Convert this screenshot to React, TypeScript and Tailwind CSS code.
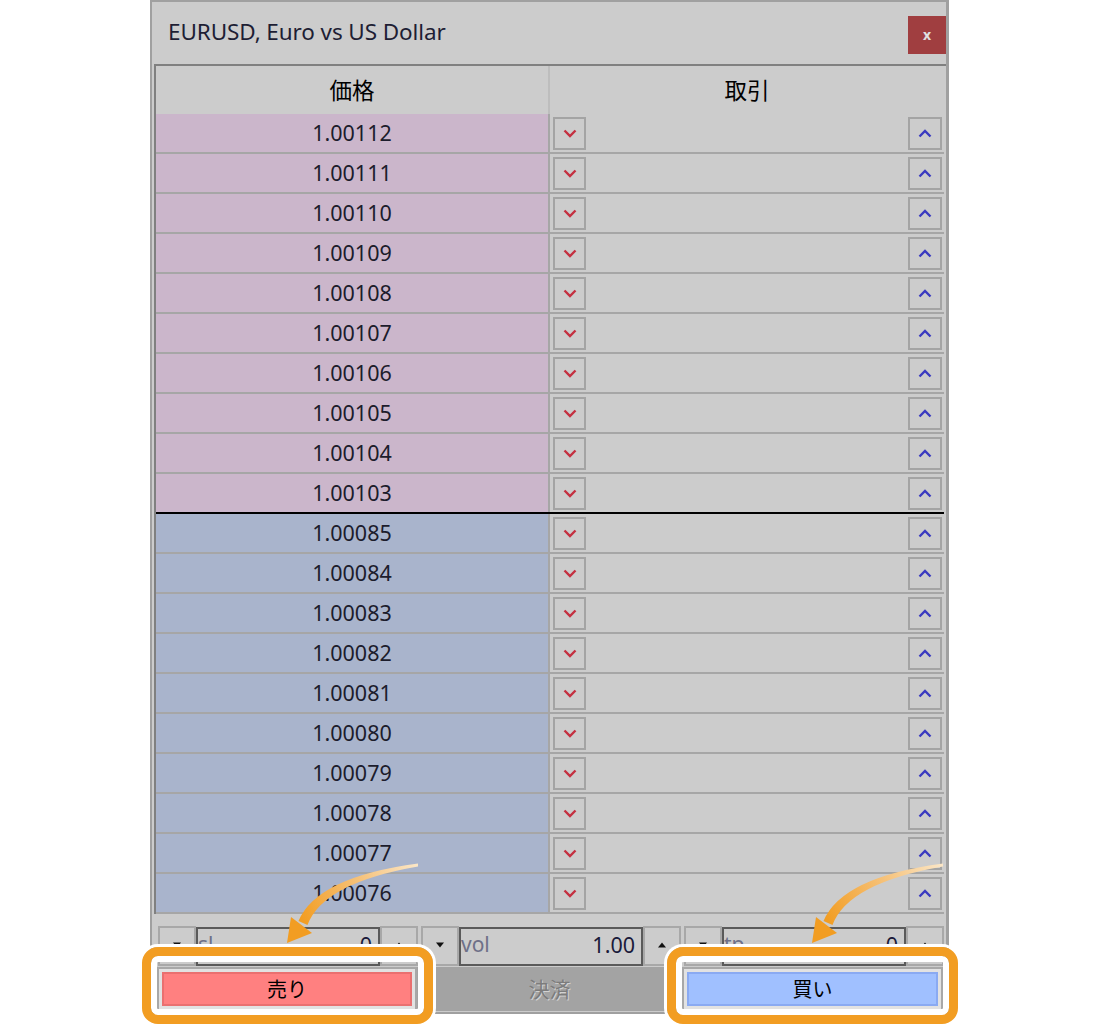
import React from "react";

const pinkPrices = ["1.00112","1.00111","1.00110","1.00109","1.00108","1.00107","1.00106","1.00105","1.00104","1.00103"];
const bluePrices = ["1.00085","1.00084","1.00083","1.00082","1.00081","1.00080","1.00079","1.00078","1.00077","1.00076"];

function ChevronDown() {
  return (
    <svg width="14" height="9" viewBox="0 0 14 9">
      <polyline points="1.5,1.5 7,7 12.5,1.5" fill="none" stroke="#c43040" strokeWidth="2.4" strokeLinejoin="miter" />
    </svg>
  );
}

function ChevronUp() {
  return (
    <svg width="14" height="9" viewBox="0 0 14 9">
      <polyline points="1.5,7.5 7,2 12.5,7.5" fill="none" stroke="#3a3ac0" strokeWidth="2.4" strokeLinejoin="miter" />
    </svg>
  );
}

function TriDown() {
  return (
    <svg width="10" height="6" viewBox="0 0 10 6">
      <polygon points="1,0.5 9,0.5 5,5.5" fill="#111" />
    </svg>
  );
}

function TriUp() {
  return (
    <svg width="10" height="6" viewBox="0 0 10 6">
      <polygon points="1,5.5 9,5.5 5,0.5" fill="#111" />
    </svg>
  );
}

function Row({ price, kind, last }: { price: string; kind: "pink" | "blue"; last: boolean }) {
  return (
    <div className={`flex h-[40px] border-b-2 ${last ? "border-black" : "border-[#a6a6a6]"}`}>
      <div
        className={`w-[394px] shrink-0 border-r-2 border-[#a6a6a6] flex items-center justify-center text-[21.5px] text-[#1c1c2c] pt-[1px] ${
          kind === "pink" ? "bg-[#cbb6cb]" : "bg-[#a9b4cc]"
        }`}
      >
        {price}
      </div>
      <div className="flex-1 flex items-center justify-between pl-[3px] pr-[2px]">
        <div className="w-[33px] h-[33px] border-2 border-[#a4a4a4] flex items-center justify-center">
          <ChevronDown />
        </div>
        <div className="w-[34px] h-[33px] border-2 border-[#a4a4a4] flex items-center justify-center">
          <ChevronUp />
        </div>
      </div>
    </div>
  );
}

function SpinGroup({ label, value }: { label: string; value: string }) {
  return (
    <div className="flex h-[40px]">
      <div className="w-[38px] shrink-0 border-2 border-[#a8a8a8] flex items-center justify-center pb-[2px]">
        <TriDown />
      </div>
      <div className="flex-1 border-2 border-[#5a5a5a] flex items-center justify-between pl-[0px] pr-[6px] h-[39px] mt-[1px] pb-[3px]">
        <span className="text-[21px] text-[#6e7088]">{label}</span>
        <span className="text-[21.5px] text-[#1a1a3a]">{value}</span>
      </div>
      <div className="w-[38px] shrink-0 border-2 border-[#a8a8a8] flex items-center justify-center pb-[2px]">
        <TriUp />
      </div>
    </div>
  );
}

function Arrow({ left, id }: { left: number; id: string }) {
  return (
    <svg
      className="absolute pointer-events-none"
      style={{ left: left, top: 858 }}
      width="142"
      height="90"
      viewBox="-5 -85 142 90"
    >
      <defs>
        <linearGradient id={id} gradientUnits="userSpaceOnUse" x1="130" y1="-78" x2="16" y2="-20">
          <stop offset="0" stopColor="#fbe6c6" />
          <stop offset="0.45" stopColor="#f6c27a" />
          <stop offset="1" stopColor="#f29d22" />
        </linearGradient>
      </defs>
      <path d="M 11.5,-22 Q 30,-66 131,-79.5 L 131,-76.5 Q 36,-60 20.5,-18 Z" fill={`url(#${id})`} />
      <path d="M 0,0 L 4,-26 L 25,-10 Z" fill="#f29d22" />
    </svg>
  );
}

export default function App() {
  return (
    <div className="relative w-[1100px] h-[1030px] bg-white overflow-hidden font-['Noto_Sans','Noto_Sans_CJK_JP',sans-serif]">
      <div className="ml-[150px] w-[799px] bg-[#cccccc] border-2 border-r-[3px] border-[#a0a0a0] flex flex-col pb-[3px]">
        {/* Title bar */}
        <div className="h-[62px] flex justify-between">
          <div className="flex items-center pl-[16px] text-[22.5px] text-[#1e1e34] tracking-[-0.1px] pb-[2px]">
            EURUSD, Euro vs US Dollar
          </div>
          <div className="mt-[14px] w-[38px] h-[38px] bg-[#a03e40] flex items-center justify-center text-[#e0e0e0] text-[14px] font-bold leading-none">
            x
          </div>
        </div>

        {/* Table */}
        <div className="ml-[2px] border-l-2 border-t-2 border-[#808080] flex flex-col">
          <div className="flex h-[48px] pr-[2px]">
            <div className="w-[394px] shrink-0 border-r-2 border-[#bdbdbd] flex items-center justify-center text-[22.5px] text-black font-['Noto_Sans_CJK_JP',sans-serif]">
              価格
            </div>
            <div className="flex-1 flex items-center justify-center text-[22.5px] text-black font-['Noto_Sans_CJK_JP',sans-serif]">
              取引
            </div>
          </div>
          <div className="pr-[2px]">
            {pinkPrices.map((p, i) => (
              <Row key={p} price={p} kind="pink" last={i === pinkPrices.length - 1} />
            ))}
            {bluePrices.map((p) => (
              <Row key={p} price={p} kind="blue" last={false} />
            ))}
          </div>
        </div>

        {/* Spin controls */}
        <div className="mt-[12px] pl-[6px] pr-[2px] grid grid-cols-3 gap-[3px]">
          <SpinGroup label="sl" value="0" />
          <SpinGroup label="vol" value="1.00" />
          <SpinGroup label="tp" value="0" />
        </div>

        {/* Action buttons */}
        <div className="mt-[1px] pl-[5px] pr-[3px] grid grid-cols-[260px_1fr_261px] h-[42px]">
          <div className="border-2 border-[#a8a8a8] bg-[#e2e2e2] p-[3px]">
            <div className="h-full bg-[#ff8080] border-2 border-[#ea7070] flex items-center justify-center text-[20px] text-black font-['Noto_Sans_CJK_JP',sans-serif]">
              売り
            </div>
          </div>
          <div className="bg-[#a3a3a3] flex items-center justify-center text-[21px] text-[#7c7c7c] [text-shadow:1px_1px_0_#d2d2d2] font-['Noto_Sans_CJK_JP',sans-serif]">
            決済
          </div>
          <div className="border-2 border-[#a8a8a8] bg-[#e2e2e2] p-[3px]">
            <div className="h-full bg-[#a0c0ff] border-2 border-[#8aaaf2] flex items-center justify-center text-[20px] text-black font-['Noto_Sans_CJK_JP',sans-serif]">
              買い
            </div>
          </div>
        </div>
      </div>

      {/* Highlight boxes */}
      <div className="absolute left-[142px] top-[947px] w-[291px] h-[77px] rounded-[16px] border-[9px] border-[#f29d22] shadow-[0_0_0_3px_#ffffff,inset_0_0_0_6px_#ffffff] pointer-events-none" />
      <div className="absolute left-[667px] top-[947px] w-[291px] h-[77px] rounded-[16px] border-[9px] border-[#f29d22] shadow-[0_0_0_3px_#ffffff,inset_0_0_0_6px_#ffffff] pointer-events-none" />

      {/* Arrows */}
      <Arrow left={282} id="ga" />
      <Arrow left={807} id="gb" />
    </div>
  );
}
